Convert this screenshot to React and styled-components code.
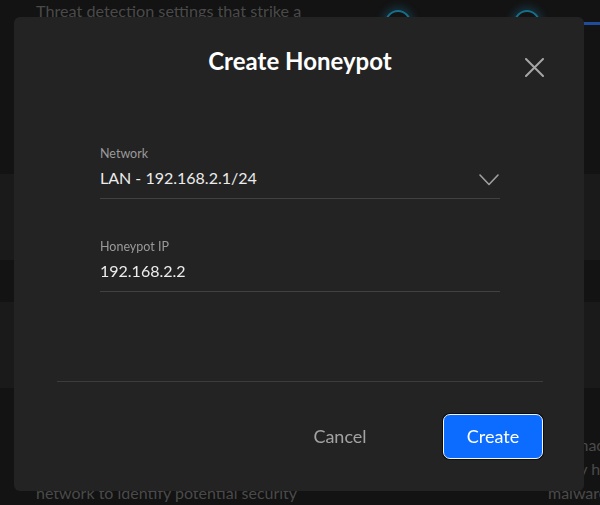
import React from "react";
import styled, { createGlobalStyle } from "styled-components";

const Global = createGlobalStyle`
  html, body {
    margin: 0;
    padding: 0;
    height: 100%;
    overflow: hidden;
    background: #131313;
    font-family: Lato, "Noto Sans", sans-serif;
  }
`;

const Page = styled.div`
  display: flex;
  flex-direction: column;
  width: 600px;
  height: 505px;
  overflow: hidden;
`;

const Band = styled.div`
  height: ${(p) => p.$h}px;
  background: ${(p) => (p.$light ? "#1a1a1a" : "#131313")};
  display: flex;
  flex-shrink: 0;
`;

const TopBand = styled(Band)`
  padding-left: 36px;
  align-items: flex-start;
`;

const BgText = styled.div`
  color: #4a4a4a;
  font-size: 16px;
  line-height: 24px;
  white-space: nowrap;
`;

const TopText = styled(BgText)`
  width: 349px;
  line-height: 22px;
  font-size: 16.2px;
`;

const Knob = styled.div`
  width: 22px;
  height: 22px;
  margin-top: 10px;
  margin-right: ${(p) => p.$gap || 0}px;
  border-radius: 50%;
  border: 2px solid #16708c;
  box-shadow: 0 0 7px 4px rgba(30, 110, 150, 0.28);
  flex-shrink: 0;
`;

const BlueLine = styled.div`
  margin-left: auto;
  margin-top: 22px;
  width: 40px;
  height: 3px;
  background: #1f4d9c;
`;

const BottomBand = styled(Band)`
  align-items: flex-end;
  padding: 0 0 0 36px;
`;

const LeftCol = styled.div`
  width: 512px;
  flex-shrink: 0;
`;

const RightCol = styled.div`
  flex-shrink: 0;
`;

const Modal = styled.div`
  position: fixed;
  left: 14px;
  top: 17px;
  width: 570px;
  height: 474px;
  background: #232323;
  border-radius: 6px;
  display: flex;
  flex-direction: column;
  box-sizing: border-box;
  padding-top: 30px;
`;

const Title = styled.h2`
  margin: 0;
  font-size: 24px;
  line-height: 28px;
  font-weight: 700;
  color: #ffffff;
  text-align: center;
  padding-left: 2px;
`;

const Close = styled.button`
  position: absolute;
  top: 41px;
  right: 40px;
  width: 19px;
  height: 19px;
  padding: 0;
  border: 0;
  background: none;
  display: flex;
`;

const Form = styled.div`
  margin: 71px 0 0 86px;
  width: 400px;
  display: flex;
  flex-direction: column;
  gap: 40px;
`;

const Field = styled.div`
  display: flex;
  flex-direction: column;
  gap: 7px;
  padding-bottom: 10px;
  border-bottom: 1px solid #414141;
`;

const Label = styled.div`
  font-size: 12.5px;
  line-height: 15px;
  color: #9a9a9a;
`;

const ValueRow = styled.div`
  display: flex;
  align-items: center;
  justify-content: space-between;
  height: 20px;
`;

const Value = styled.div`
  font-size: 16px;
  line-height: 20px;
  color: #ececec;
`;

const Chevron = styled.svg`
  margin-top: 3px;
  margin-right: 1px;
`;

const Divider = styled.div`
  margin: 89px 41px 0 43px;
  height: 1px;
  background: #3c3c3c;
`;

const Footer = styled.div`
  margin-top: 32px;
  padding-right: 41px;
  display: flex;
  justify-content: flex-end;
  gap: 53px;
`;

const Button = styled.button`
  width: 100px;
  height: 45px;
  box-sizing: border-box;
  font-family: Lato, "Noto Sans", sans-serif;
  font-size: 18px;
  border-radius: 7px;
  cursor: pointer;
  display: flex;
  align-items: center;
  justify-content: center;
  padding: 0 0 1px;
  color: ${(p) => (p.$primary ? "#ffffff" : "#a3a3a3")};
  background: ${(p) => (p.$primary ? "#0b6cff" : "transparent")};
  border: ${(p) => (p.$primary ? "1.5px solid #f4f4f4" : "0")};
  box-shadow: ${(p) => (p.$primary ? "0 0 0 1px #0d0d0d" : "none")};
`;

export default function App() {
  return (
    <>
      <Global />
      <Page>
        <TopBand $h={174}>
          <TopText>Threat detection settings that strike a</TopText>
          <Knob $gap={103} />
          <Knob />
          <BlueLine />
        </TopBand>
        <Band $h={86} $light />
        <Band $h={42} />
        <Band $h={86} $light />
        <BottomBand $h={117}>
          <LeftCol>
            <BgText>Honeypots act as decoy devices on your</BgText>
            <BgText>local network that can attract intruders.</BgText>
            <BgText>Traffic is monitored on each local</BgText>
            <BgText>network to identify potential security</BgText>
          </LeftCol>
          <RightCol>
            <BgText>Any hackers</BgText>
            <BgText>Many hosts</BgText>
            <BgText>malware</BgText>
          </RightCol>
        </BottomBand>
      </Page>
      <Modal>
        <Title>Create Honeypot</Title>
        <Close aria-label="Close">
          <svg width="19" height="19" viewBox="0 0 19 19">
            <path d="M1 1 L18 18 M18 1 L1 18" stroke="#a6a6a6" strokeWidth="2" strokeLinecap="round" fill="none" />
          </svg>
        </Close>
        <Form>
          <Field>
            <Label>Network</Label>
            <ValueRow>
              <Value>LAN - 192.168.2.1/24</Value>
              <Chevron width="20" height="12" viewBox="0 0 20 12">
                <polyline points="1,1 10,10.5 19,1" fill="none" stroke="#a0a0a0" strokeWidth="1.6" strokeLinecap="round" strokeLinejoin="round" />
              </Chevron>
            </ValueRow>
          </Field>
          <Field>
            <Label>Honeypot IP</Label>
            <ValueRow>
              <Value>192.168.2.2</Value>
            </ValueRow>
          </Field>
        </Form>
        <Divider />
        <Footer>
          <Button>Cancel</Button>
          <Button $primary>Create</Button>
        </Footer>
      </Modal>
    </>
  );
}
